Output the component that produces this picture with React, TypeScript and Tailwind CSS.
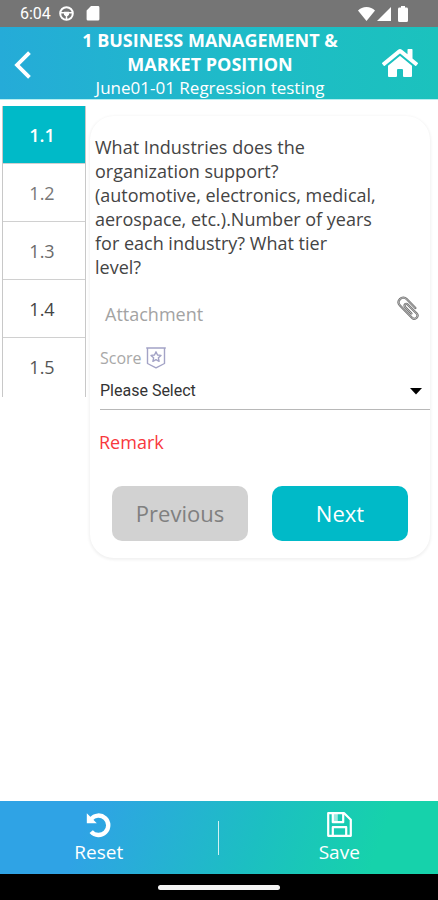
import { useState } from "react";
import { FaHome } from "react-icons/fa";

const SECTIONS = [
  { id: "1.1", color: "text-white" },
  { id: "1.2", color: "text-[#777777]" },
  { id: "1.3", color: "text-[#6b6b6b]" },
  { id: "1.4", color: "text-[#444444]" },
  { id: "1.5", color: "text-[#555555]" },
];

function StatusBar() {
  return (
    <div className="flex h-[27px] shrink-0 items-center justify-between bg-[#757575] pr-[30px] pl-5 text-white">
      <div className="flex items-center gap-2">
        <span className="font-[Roboto,sans-serif] text-base leading-5">6:04</span>
        <svg width="15" height="15" viewBox="0 0 15 15" fill="none" stroke="currentColor">
          <circle cx="7.5" cy="7.5" r="6.3" strokeWidth="2" />
          <path d="M1.5 6.8h12M7.5 8v6" strokeWidth="1.5" />
          <path d="M5 5.8h5v3L8.8 10H6.2L5 8.8z" fill="currentColor" stroke="none" />
        </svg>
        <svg className="ml-1" width="14" height="15" viewBox="0 0 14 15" fill="currentColor">
          <path d="M5 0h7a1.4 1.4 0 0 1 1.4 1.4v11.8a1.4 1.4 0 0 1-1.4 1.4H2A1.4 1.4 0 0 1 .6 13.2V4.4z" />
        </svg>
      </div>
      <div className="flex items-center gap-[2px]">
        <svg width="17" height="14" viewBox="0 0 17 14" fill="currentColor">
          <path d="M8.5 14 0 3.6C2.2 1.4 5.2 0 8.5 0S14.8 1.4 17 3.6z" />
        </svg>
        <svg width="14" height="14" viewBox="0 0 14 14" fill="currentColor">
          <path d="M14 0v14H0z" />
        </svg>
        <svg className="ml-[5px]" width="10" height="16" viewBox="0 0 10 16" fill="currentColor">
          <path d="M3 0h4v1.6h1.5A1.5 1.5 0 0 1 10 3v11.5A1.5 1.5 0 0 1 8.5 16h-7A1.5 1.5 0 0 1 0 14.5V3a1.5 1.5 0 0 1 1.5-1.4H3z" />
        </svg>
      </div>
    </div>
  );
}

const CLIP_PATH =
  "M20 12.5 10.5 2.8C8.5.8 5.3.9 3.3 2.9c-2 2-2 4.7 0 6.8l13 13.3c1.5 1.5 3.6 1.5 5 .1 1.4-1.5 1.3-3.5-.1-5L11.6 8.7c-.9-.9-2-.9-2.8-.1-.8.8-.8 1.9.1 2.8l6.8 7";

// Grey wire with a lighter core
function PaperclipIcon() {
  return (
    <svg width="24" height="26" viewBox="-1 -1 26 27" fill="none" strokeLinecap="round" strokeLinejoin="round">
      <path stroke="#6e6e6e" strokeWidth="2.4" d={CLIP_PATH} />
      <path stroke="#e8e8e8" strokeWidth="0.7" d={CLIP_PATH} />
    </svg>
  );
}

function BadgeIcon() {
  return (
    <svg width="20" height="22" viewBox="0 0 20 22" fill="none" stroke="#a3a3c6" strokeWidth="1.4" strokeLinejoin="round">
      <path d="M.2 1h19.6M1.5 1v15.5l8.5 4.3 8.5-4.3V1" />
      <path d="m10 4.8 1.5 3.2 3.5.4-2.6 2.4.7 3.5-3.1-1.7-3.1 1.7.7-3.5L5 8.400 8.500 8z" />
    </svg>
  );
}

function ResetIcon() {
  return (
    <svg width="26" height="26" viewBox="0 0 26 26" fill="none">
      <path d="M5 7.2A9.7 9.7 0 1 1 5.2 19.6" stroke="currentColor" strokeWidth="4.4" />
      <path d="M.8 1.2 10.8 11.2H.8z" fill="currentColor" />
    </svg>
  );
}

function SaveIcon() {
  return (
    <svg width="25" height="25" viewBox="0 0 25 25" fill="none" stroke="currentColor" strokeWidth="2.2" strokeLinejoin="round">
      <path d="M1.2 1.2h16l6.6 6.6v16H1.2z" />
      <path d="M5.8 1.5v8.7h10.4V1.5M5.8 23.5v-8.3h13.400v8.300" />
      <path d="M5.8 1.5h5v8.700h-5z" fill="currentColor" fillOpacity="0.6" stroke="none" />
    </svg>
  );
}

export default function App() {
  const [active, setActive] = useState("1.1");

  return (
    <div className="flex min-h-screen flex-col bg-white font-['Open_Sans',sans-serif]">
      <StatusBar />

      {/* Header */}
      <header className="flex shrink-0 items-center justify-between border-b border-[#b5eef0] bg-linear-to-r from-[#25abd8] via-[#1fbac9] to-[#1bc2bd] pr-5 pl-[14px] text-white">
        <button type="button" aria-label="Back" className="flex w-6 items-center pt-1">
          <svg width="18" height="28" viewBox="0 0 16 26" fill="none" stroke="currentColor" strokeWidth="3.6">
            <path d="M14 1.5 2.5 13 14 24.5" />
          </svg>
        </button>
        <div className="flex-1 text-center">
          <h1 className="px-6 pt-px text-lg leading-6 font-bold">1 BUSINESS MANAGEMENT &amp; MARKET POSITION</h1>
          <p className="text-[17px] leading-[23px]">June01-01 Regression testing</p>
        </div>
        <button type="button" aria-label="Home" className="flex w-9 items-center justify-end">
          <FaHome size={36} />
        </button>
      </header>

      <main className="flex flex-1 items-start gap-1 pr-2 pl-[2px]">
        <nav className="mt-[6px] h-[291px] w-[84px] shrink-0 overflow-hidden border-x border-[#c8c8c8]">
          {SECTIONS.map((s) => (
            <button
              key={s.id}
              type="button"
              onClick={() => setActive(s.id)}
              className={`flex h-[58px] w-full items-center justify-center border-b border-[#d0d0d0] pr-1 text-lg last:border-b-0 ${s.id === active ? "bg-[#00bac8] font-semibold text-white" : s.color}`}
            >
              {s.id}
            </button>
          ))}
        </nav>

        {/* Question card */}
        <section className="mt-4 flex min-w-0 flex-1 flex-col rounded-3xl bg-white pt-[19px] pb-[17px] shadow-[0_1px_3px_1px_rgba(0,0,0,0.06)]">
          <p className="pr-[53px] pl-[5px] text-lg leading-6 text-[#444444]">
            What Industries does the organization support? (automotive, electronics, medical, aerospace, etc.).Number of years for each industry? What tier level?
          </p>

          <div className="mt-[9px] flex h-12 items-center justify-between pr-[10px] pl-[15px]">
            <span className="pt-1 text-lg text-[#a3a3a3]">Attachment</span>
            <button type="button" aria-label="Add attachment" className="pb-2">
              <PaperclipIcon />
            </button>
          </div>

          <div className="mt-2 ml-[10px]">
            <label htmlFor="score" className="flex h-7 items-center gap-1 text-base text-[#a8a8a8]">
              Score
              <BadgeIcon />
            </label>
            <div className="relative">
              <select
                id="score"
                className="h-[38px] w-full appearance-none border-b border-[#b8b8b8] bg-transparent font-[Roboto,sans-serif] text-base text-[#333333] outline-none"
              >
                <option>Please Select</option>
              </select>
              <svg className="pointer-events-none absolute top-4 right-2" width="12" height="7" viewBox="0 0 12 7">
                <path d="M0 0h12L6 6.5z" fill="#000000" />
              </svg>
            </div>
          </div>

          <button type="button" className="mt-5 ml-[9px] self-start text-lg leading-6 text-[#f8383d]">
            Remark
          </button>

          <div className="mt-8 grid grid-cols-2 gap-6 px-[22px] text-[22px]">
            <button type="button" disabled className="h-[55px] rounded-[10px] bg-[#d2d2d2] text-[#808080]">
              Previous
            </button>
            <button type="button" className="h-[55px] rounded-[10px] bg-[#00bac8] text-white">
              Next
            </button>
          </div>
        </section>
      </main>

      {/* Bottom actions */}
      <footer className="flex h-[73px] shrink-0 items-center bg-[linear-gradient(110deg,#2fa3e5_20%,#1cbfc2_58%,#16d2ab_85%)] text-[19px] leading-6 text-white">
        <button type="button" className="flex flex-1 flex-col items-center gap-[2px] pr-5">
          <ResetIcon />
          Reset
        </button>
        <span className="h-[34px] w-px bg-white/80" />
        <button type="button" className="flex flex-1 flex-col items-center gap-[3px] pl-[22px]">
          <SaveIcon />
          Save
        </button>
      </footer>

      {/* System navigation bar */}
      <div className="flex h-[26px] shrink-0 items-center justify-center bg-black">
        <span className="h-[5px] w-[122px] rounded-full bg-[#f5f5f5]" />
      </div>
    </div>
  );
}
